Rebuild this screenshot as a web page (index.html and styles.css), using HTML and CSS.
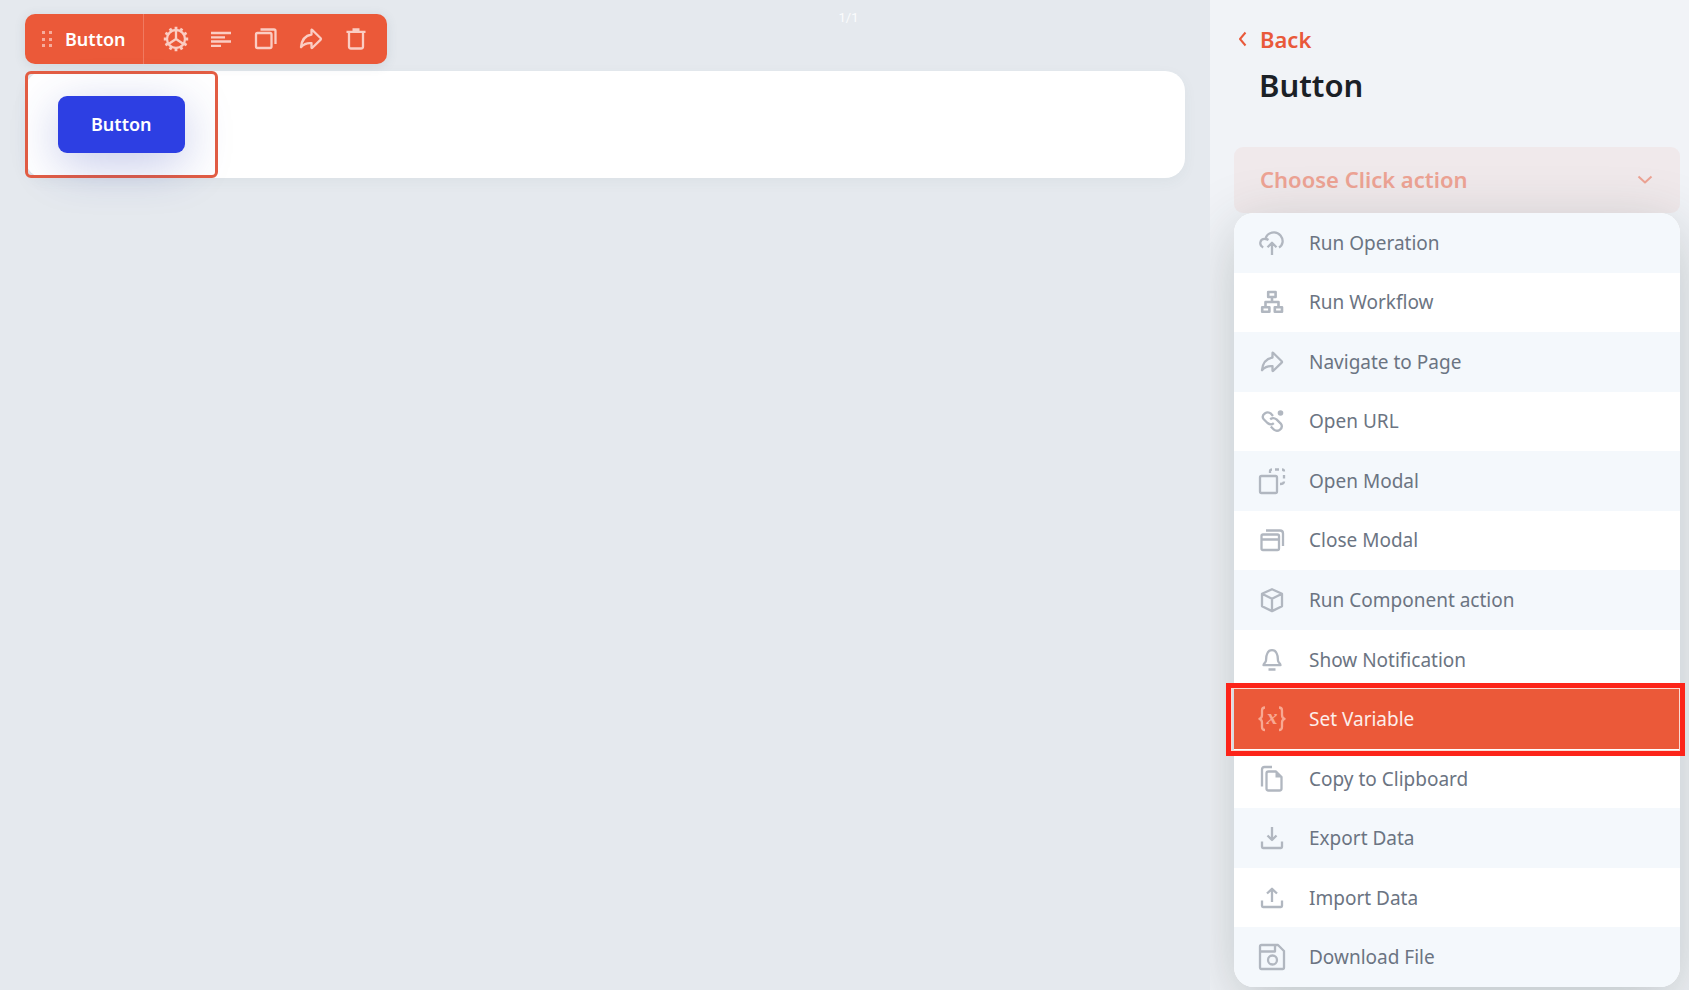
FILE: index.html
```html
<!DOCTYPE html>
<html lang="en">
<head>
<meta charset="utf-8">
<meta name="viewport" content="width=device-width, initial-scale=1">
<title>Button settings</title>
<link rel="stylesheet" href="styles.css">
</head>
<body>
<div class="app">
  <main class="canvas">
    <div class="toolbar" role="toolbar" aria-label="Component tools">
      <div class="toolbar-name">
        <svg class="grip" width="12" height="18" viewBox="0 0 12 18" aria-hidden="true"><path d="M1 1h3v3H1zM8 1h3v3H8zM1 8h3v3H1zM8 8h3v3H8zM1 14h3v3H1zM8 14h3v3H8z"/></svg>
        <span>Button</span>
      </div>
      <div class="toolbar-actions">
        <button class="tool" type="button" aria-label="Settings">
          <svg class="icon" viewBox="0 0 28 28"><circle cx="14" cy="14" r="9"/><path d="M14 5v9l-7.500 5M14 14l7.500 5"/><path stroke-width="2.800" d="M14 4.500v-2.700M18.750 5.770l1.350-2.340M22.230 9.250l2.340-1.350M23.500 14h2.700M22.230 18.750l2.340 1.350M18.750 22.230l1.350 2.340M14 23.500v2.700M9.250 22.230l-1.350 2.340M5.770 18.750l-2.340 1.350M4.500 14H1.800M5.770 9.250L3.430 7.900M9.250 5.770L7.900 3.430"/></svg>
        </button>
        <button class="tool" type="button" aria-label="Align">
          <svg class="icon" viewBox="0 0 28 28"><path d="M4 8h20M4 12.300h14M4 16.500h20M4 20.800h10"/></svg>
        </button>
        <button class="tool" type="button" aria-label="Duplicate">
          <svg class="icon" viewBox="0 0 28 28"><rect x="4" y="8" width="15.500" height="15" rx="1.500"/><path d="M8.500 4.500H22a1.500 1.500 0 0 1 1.500 1.500v13"/></svg>
        </button>
        <button class="tool" type="button" aria-label="Move">
          <svg class="icon" viewBox="0 0 28 28"><path d="M14.500 9.500V5.200q0-1 .8-.2l8.400 8.200q.6.700 0 1.400l-8.400 8.200q-.8.600-.8-.3v-4.300c-4.500-.5-7.800 1-10.500 4 .6-6.500 3.500-11.500 10.500-12.700z"/></svg>
        </button>
        <button class="tool" type="button" aria-label="Delete">
          <svg class="icon" viewBox="0 0 28 28"><path d="M4.500 6.800h19M10.500 4.500h7M7 7v14.500A2 2 0 0 0 9 23.500h10a2 2 0 0 0 2-2V7"/></svg>
        </button>
      </div>
    </div>
    <section class="card">
      <div class="selection">
        <button class="primary" type="button">Button</button>
      </div>
    </section>
  </main>

  <aside class="panel">
    <header class="panel-head">
      <a class="back" href="#">
        <svg width="9" height="16" viewBox="0 0 9 16" aria-hidden="true"><path d="M7.500 1.500L2 8l5.500 6.500"/></svg>
        <span>Back</span>
      </a>
      <h1 class="title">Button</h1>
    </header>
    <button class="chooser" type="button" aria-haspopup="menu" aria-expanded="true">
      <span>Choose Click action</span>
      <svg width="16" height="9" viewBox="0 0 16 9" aria-hidden="true"><path d="M1.500 1.500L8 7.500l6.500-6"/></svg>
    </button>
    <div class="menu" role="menu">
      <button class="item" type="button" role="menuitem">
        <svg class="icon" viewBox="0 0 28 28"><path d="M5.200 18.500C.6 16 1.600 9.500 7.500 10c1.500-7.500 11-8.500 15-3.500 3.500 4.500 2.500 9.500-1.500 12M7.500 10c1.200 0 2 .3 3 1M14 26V14M9.500 18.200L14 13.800l4.500 4.400"/></svg>
        <span>Run Operation</span>
      </button>
      <button class="item" type="button" role="menuitem">
        <svg class="icon" viewBox="0 0 28 28"><g stroke-width="2.600"><rect x="10.200" y="4" width="7.400" height="5"/><rect x="4.200" y="19.200" width="7.200" height="4.500"/><rect x="16.800" y="19.200" width="7.200" height="4.500"/><path d="M14 9v5M7.500 19v-5h13v5"/></g></svg>
        <span>Run Workflow</span>
      </button>
      <button class="item" type="button" role="menuitem">
        <svg class="icon" viewBox="0 0 28 28"><path d="M14.500 9.500V5.200q0-1 .8-.2l8.400 8.200q.6.700 0 1.400l-8.400 8.200q-.8.600-.8-.3v-4.300c-4.500-.5-7.800 1-10.500 4 .6-6.500 3.500-11.500 10.500-12.700z"/></svg>
        <span>Navigate to Page</span>
      </button>
      <button class="item" type="button" role="menuitem">
        <svg class="icon" viewBox="0 0 28 28"><circle class="solid" cx="22.500" cy="6" r="2.800"/><path d="M15 9l-2-2.300C9 3.300 2.800 7.800 5.500 12l4 4c2.300 1.800 4.800 1.500 6.300.2M12.800 19.500l3.200 3.200c4 3 9.800-1.500 7-5.800l-4.500-4.500c-2.300-1.800-4.800-1.300-6.300 0"/></svg>
        <span>Open URL</span>
      </button>
      <button class="item" type="button" role="menuitem">
        <svg class="icon" viewBox="0 0 28 28"><rect x="2" y="9" width="17" height="17" rx="1.500"/><path d="M12 6V4q0-1.500 2-1.500M17 2.500h4M24 2.500q2 0 2 2M26 8v3.500M26 14.500q0 2.500-4 2.500"/></svg>
        <span>Open Modal</span>
      </button>
      <button class="item" type="button" role="menuitem">
        <svg class="icon" viewBox="0 0 28 28"><rect x="3.500" y="8.500" width="17.500" height="15.500" rx="1.500"/><path d="M3.500 13.500H21M8 4.500h14q3 0 3 3V20"/></svg>
        <span>Close Modal</span>
      </button>
      <button class="item" type="button" role="menuitem">
        <svg class="icon" viewBox="0 0 28 28"><path d="M14 3.200l10 4.600v12.400l-10 4.900-10-4.900V7.800zM4 7.800l10 5 10-5M14 12.800V25"/></svg>
        <span>Run Component action</span>
      </button>
      <button class="item" type="button" role="menuitem">
        <svg class="icon" viewBox="0 0 28 28"><path d="M8 14.500c0-3 .3-5.500 1.500-7.500a5 5 0 0 1 9 0c1.200 2 1.500 4.500 1.500 7.500 0 2 2.500 3 2.500 4.700H5.500C5.500 17.500 8 16.500 8 14.500zM10.500 23.500h7"/></svg>
        <span>Show Notification</span>
      </button>
      <button class="item item-active" type="button" role="menuitem">
        <svg class="icon" viewBox="0 0 28 28"><path d="M7 2.500q-3 0-3 3v4.500q0 3-2.500 3.800Q4 14.500 4 17.500V22q0 3 3 3M21 2.500q3 0 3 3v4.500q0 3 2.500 3.800-2.500.7-2.500 3.700V22q0 3-3 3"/><text class="glyph" x="14" y="19" text-anchor="middle">x</text></svg>
        <span>Set Variable</span>
      </button>
      <button class="item" type="button" role="menuitem">
        <svg class="icon" viewBox="0 0 28 28"><path d="M4 21.500V4.500Q4 2 6.500 2H14M8.500 8.500q0-2 2-2H18l5.500 5.500v11.500q0 2-2 2h-11q-2 0-2-2z"/><path class="solid" d="M17.500 6.500l6 6h-6z"/></svg>
        <span>Copy to Clipboard</span>
      </button>
      <button class="item" type="button" role="menuitem">
        <svg class="icon" viewBox="0 0 28 28"><path d="M14 3v13M9.500 11.500L14 16l4.500-4.500M4 17.500v5.500q0 1 1 1h18q1 0 1-1v-5.500"/></svg>
        <span>Export Data</span>
      </button>
      <button class="item" type="button" role="menuitem">
        <svg class="icon" viewBox="0 0 28 28"><path d="M14 18V5M9 9.500l5-4.700 5 4.700M4 16.500V22q0 1 1 1h18q1 0 1-1v-5.500"/></svg>
        <span>Import Data</span>
      </button>
      <button class="item" type="button" role="menuitem">
        <svg class="icon" viewBox="0 0 28 28"><path d="M2 3.500Q2 2 3.500 2H20l6 6v16.500q0 1.500-1.500 1.500h-21Q2 26 2 24.500zM3 8.500h14V3"/><circle cx="14.500" cy="17" r="4.500"/></svg>
        <span>Download File</span>
      </button>
    </div>
  </aside>
  <div class="counter">1/1</div>
</div>
</body>
</html>
```
FILE: styles.css
```css
* { box-sizing: border-box; }

body {
  margin: 0;
  font-family: "Noto Sans", "Open Sans", sans-serif;
  background: #e5e9ee;
}

button {
  margin: 0;
  border: 0;
  font: inherit;
  cursor: pointer;
}

svg {
  flex: none;
  overflow: visible;
  fill: none;
  stroke: currentColor;
  stroke-width: 2;
  stroke-linejoin: round;
}

.icon { width: 28px; height: 28px; display: block; stroke-width: 2.3; }
.solid { fill: currentColor; stroke: none; }
.glyph {
  fill: currentColor;
  stroke: none;
  font: italic bold 22px "Liberation Serif", serif;
}

.app {
  position: relative;
  display: grid;
  grid-template-columns: 1fr 479px;
  min-height: 100vh;
}

.canvas { padding: 14px 25px 0; }

.toolbar {
  display: inline-flex;
  height: 50px;
  border-radius: 10px;
  background: #eb5939;
  color: #fff;
  box-shadow: 0 2px 12px rgba(60, 80, 100, 0.12);
}

.toolbar-name {
  display: flex;
  align-items: center;
  gap: 12px;
  padding: 0 17px 0 16px;
  border-right: 1px solid #f07a60;
  font-size: 18px;
  font-weight: 600;
}

.grip { fill: #f6ac9c; stroke: none; }

.toolbar-actions {
  display: flex;
  align-items: center;
  gap: 17px;
  padding: 0 17px 0 18px;
}

.tool { padding: 0; background: none; color: #fbcdc3; }

.card {
  display: flex;
  margin-top: 7px;
  border-radius: 20px;
  background: #fff;
  box-shadow: 0 4px 14px rgba(60, 90, 100, 0.05);
}

.selection {
  padding: 22px 30px;
  border: 3px solid #e35d43;
  border-radius: 6px;
}

.primary {
  height: 57px;
  padding: 0 33px 2px;
  border-radius: 9px;
  background: #2d3fe3;
  color: #fff;
  font-size: 18px;
  font-weight: 600;
  box-shadow: 0 12px 48px rgba(45, 63, 180, 0.28);
}

.panel {
  display: flex;
  flex-direction: column;
  overflow: hidden;
  min-height: 100vh;
  padding: 23px 9px 3px 24px;
  background: #f1f3f7;
}

.panel-head { padding-left: 4px; height: 124px; }

.back {
  display: inline-flex;
  align-items: center;
  gap: 13px;
  color: #e9593a;
  font-size: 22px;
  font-weight: 600;
  line-height: 32px;
  text-decoration: none;
}

.title {
  margin: 10px 0 0 21px;
  color: #1b2026;
  font-size: 31px;
  font-weight: 600;
  line-height: 40px;
}

.chooser {
  display: flex;
  align-items: center;
  justify-content: space-between;
  height: 66px;
  padding: 0 27px 2px 26px;
  border-radius: 9px;
  background: #f0e9eb;
  color: #eda394;
  font-size: 22px;
  font-weight: 600;
}

.menu {
  flex: 1;
  display: grid;
  grid-auto-rows: 1fr;
  border-radius: 20px;
  background: #fff;
  box-shadow: 0 16px 60px rgba(40, 60, 60, 0.25);
}

.item {
  position: relative;
  display: flex;
  align-items: center;
  gap: 23px;
  min-height: 48px;
  padding: 0 24px;
  background: #fff;
  color: #6b7482;
  font-size: 19px;
  text-align: left;
}

.item .icon { color: #b1b7c0; }
.item:nth-child(odd) { background: #f4f8fc; }
.item:first-child { border-radius: 20px 20px 0 0; }
.item:last-child { border-radius: 0 0 20px 20px; }

.item.item-active { background: #eb5939; color: #fdeeea; }
.item-active .icon { color: #f8a892; }

.item-active::after {
  content: "";
  position: absolute;
  z-index: 1;
  inset: -6px -5px -7px -8px;
  border: 5px solid #fc2419;
  box-shadow: inset 0 0 0 1px #fbd9d2;
}

.counter {
  position: absolute;
  top: 8px;
  left: 8px;
  right: 0;
  color: #fbfcfd;
  font-family: Roboto, sans-serif;
  font-size: 13px;
  line-height: 20px;
  text-align: center;
  pointer-events: none;
}
```
